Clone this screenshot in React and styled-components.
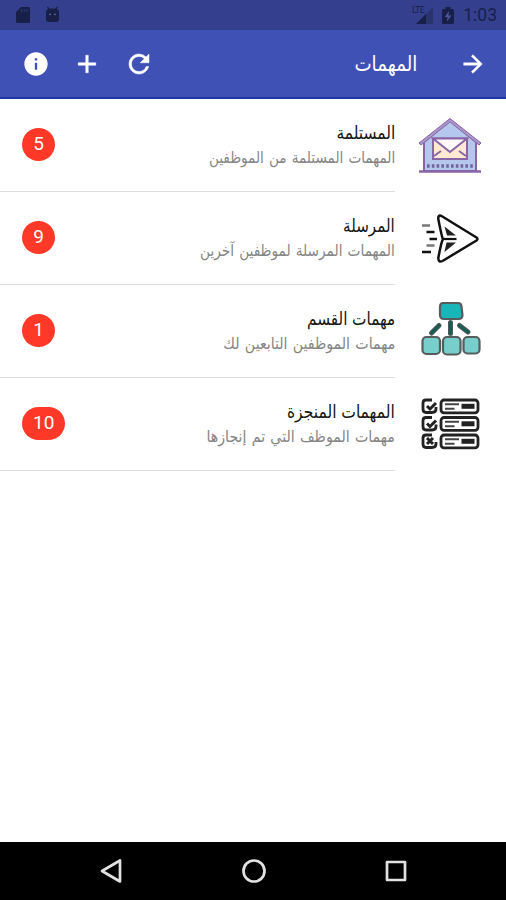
import React from "react";
import styled, { createGlobalStyle } from "styled-components";
import { MdInfo, MdAdd, MdRefresh, MdArrowForward } from "react-icons/md";

const tasks = [
  { id: 1, title: "المستلمة", text: "المهمات المستلمة من الموظفين", count: 5, titleScale: 0.86, textScale: 0.85 },
  { id: 2, title: "المرسلة", text: "المهمات المرسلة لموظفين آخرين", count: 9, titleScale: 0.84, textScale: 0.855 },
  { id: 3, title: "مهمات القسم", text: "مهمات الموظفين التابعين لك", count: 1, titleScale: 0.85, textScale: 0.885 },
  { id: 4, title: "المهمات المنجزة", text: "مهمات الموظف التي تم إنجازها", count: 10, titleScale: 0.865, textScale: 0.885 },
];

const InboxIcon = () => (
  <svg width="66" height="58" viewBox="0 0 66 58" fill="none" stroke="#8965a8" strokeWidth="2">
    <path d="M7 25L33 3L59 25V54H7Z" fill="#b5c7ec" />
    <path d="M2 26L33 1.5L64 26L62 28L33 5L4 28Z" fill="#a997cb" strokeWidth="1" />
    <path d="M16 21.500H50V42H16Z" fill="#ffe9d2" />
    <path d="M16 21.500H50L33 35Z" fill="#fffaf9" />
    <path d="M17 39L24 34M49 39L42 34" />
    <path d="M10 49H57" stroke="#71639c" strokeWidth="3.500" strokeDasharray="2.600 2.200" />
    <path d="M2 54.500H64" strokeWidth="2.400" />
  </svg>
);

const SentIcon = () => (
  <svg width="66" height="58" viewBox="0 0 66 58" fill="none" stroke="#111" strokeWidth="2.5" strokeLinejoin="round">
    <path d="M24.500 6Q21 4.500 21.300 9Q25 28 26 29Q24.500 31 21.300 48Q21.500 53 25.500 51L59.500 30.500Q61.500 29 59.500 27.500Z" />
    <path d="M26 29H39.500" strokeWidth="2.200" />
    <path d="M27.500 16.500L39 25.500H30ZM29.500 32.500H39L27.500 42Z" fill="#222" stroke="none" />
    <path d="M9.500 22H17.500M12.500 29H20M5 42H14" strokeWidth="2.300" />
    <path d="M5 15.500H13M9.500 35.500H17.500" stroke="#777" strokeWidth="2.300" />
  </svg>
);

const TeamIcon = () => (
  <svg width="66" height="58" viewBox="0 0 66 58" fill="none" stroke="#555d5d" strokeWidth="2.2">
    <path d="M26 0H41Q44.500 0 44.500 4L45.500 12Q45.500 16 41.500 16H27Q23 16 23 12V4Q23 0 26 0Z" fill="#18b6b9" />
    <path d="M22 22.500L14.500 30M33.500 19.500V30.500M42.500 22.500L51 29" stroke="#4d5959" strokeWidth="5" strokeLinecap="round" />
    <path d="M22 22.500L14.500 30M33.500 19.500V30.500M42.500 22.500L51 29" stroke="#155c55" strokeWidth="2.600" strokeLinecap="round" />
    <g fill="#78cecb">
      <rect x="5.500" y="34" width="17.500" height="17" rx="4" />
      <rect x="26" y="34" width="17.500" height="17.500" rx="4" />
      <rect x="46.500" y="34" width="16" height="16.500" rx="4" />
    </g>
  </svg>
);

const DoneIcon = () => (
  <svg width="66" height="58" viewBox="0 0 66 58" fill="none" stroke="#222" strokeWidth="2.8">
    {[4, 21.5, 39].map((y, i) => (
      <g key={y} transform={`translate(1 ${y})`}>
        <path d="M14 0H8Q5 0 5 3V9Q5 12.500 8 12.500H14Q18 12.500 18 9V7" />
        <path d={i === 2 ? "M9 3L15 9M15 3L9 9" : "M9 6L12 9L18 3"} strokeWidth="3" />
        <rect x="23" y="0" width="37" height="12.800" rx="3" />
        <path d="M27 4.200H41M27 8.800H36.500" stroke="#444" strokeWidth="2" />
        <path d="M43.500 6.300H56.500" strokeWidth="5" />
      </g>
    ))}
  </svg>
);

const icons = [InboxIcon, SentIcon, TeamIcon, DoneIcon];

const App = () => {
  return (
    <Screen>
      <GlobalStyle />
      <StatusBar>
        <StatusGroup>
          <svg width="14" height="18" viewBox="0 0 14 18">
            <path d="M5 1H12.500Q14 1 14 2.500V15.500Q14 17 12.500 17H1.500Q0 17 0 15.500V6Z" fill="currentColor" />
            <path d="M5.500 3V6M8.300 3V6M11 3V6" stroke="#2b3678" strokeWidth="1.200" />
          </svg>
          <svg width="15" height="18" viewBox="0 0 15 18">
            <path d="M1 6Q1 4 3 3L2 1L3 0.500L4.500 2.500H10.500L12 0.500L13 1L12 3Q14 4 14 6ZM1 6H14V13Q14 16 11 16H4Q1 16 1 13Z" fill="currentColor" />
            <circle cx="5" cy="8.300" r="0.900" fill="#65709f" />
            <circle cx="10" cy="8.300" r="0.900" fill="#65709f" />
          </svg>
        </StatusGroup>
        <StatusGroup $end>
          <Network>
            <Lte>LTE</Lte>
            <svg width="17" height="17" viewBox="0 0 17 17">
              <path d="M0 17L17 0V17Z" fill="#29346f" />
              <path d="M0 17L10 7V17Z" fill="currentColor" />
            </svg>
          </Network>
          <svg width="12" height="17" viewBox="0 0 12 17">
            <path d="M1.500 2H3.500V0H8.500V2H10.500Q12 2 12 3.500V15.500Q12 17 10.500 17H1.500Q0 17 0 15.500V3.500Q0 2 1.500 2Z" fill="currentColor" />
            <path d="M7 4L2.800 10H5.500L5 14.500L9.300 8.500H6.500Z" fill="#4a569d" />
          </svg>
          <Clock>1:03</Clock>
        </StatusGroup>
      </StatusBar>
      <Header>
        <MdArrowForward size={28} />
        <h1>المهمات</h1>
        <Actions>
          <MdRefresh size={30} />
          <MdAdd size={30} />
          <MdInfo size={28} />
        </Actions>
      </Header>
      <List>
        {tasks.map((task, i) => {
          const Icon = icons[i];
          return (
            <Row key={task.id}>
              <IconBox><Icon /></IconBox>
              <Content>
                <Texts>
                  <Title $scale={task.titleScale}>{task.title}</Title>
                  <Description $scale={task.textScale}>{task.text}</Description>
                </Texts>
                <Badge>{task.count}</Badge>
              </Content>
            </Row>
          );
        })}
      </List>
      <NavBar>
        <svg width="24" height="26" viewBox="0 0 24 26"><path d="M21 2.500V23.500L3 13Z" /></svg>
        <svg width="26" height="26" viewBox="0 0 26 26"><circle cx="13" cy="13" r="10.500" /></svg>
        <svg width="24" height="26" viewBox="0 0 24 26"><rect x="3" y="4" width="18" height="18" /></svg>
      </NavBar>
    </Screen>
  );
};

const GlobalStyle = createGlobalStyle`
  * {
    box-sizing: border-box;
  }

  body {
    margin: 0;
    background: #fff;
    font-family: Roboto, "DejaVu Sans", sans-serif;
  }

  svg {
    display: block;
    flex-shrink: 0;
    overflow: visible;
  }
`;

const Screen = styled.div`
  display: flex;
  flex-direction: column;
  height: 900px;
  overflow: hidden;
  direction: rtl;
`;

const StatusBar = styled.div`
  display: flex;
  justify-content: space-between;
  align-items: center;
  direction: ltr;
  height: 30px;
  padding: 0 9px 0 16px;
  background-color: #34408e;
  color: #18204a;
`;

const StatusGroup = styled.div`
  display: flex;
  align-items: center;
  gap: ${({ $end }) => ($end ? "9px" : "15px")};
`;

const Network = styled.div`
  display: flex;
  align-items: flex-start;
`;

const Lte = styled.span`
  margin-right: -8px;
  font-size: 9px;
  line-height: 7px;
  letter-spacing: -0.6px;
`;

const Clock = styled.span`
  font-size: 17.5px;
  line-height: 20px;
`;

const Header = styled.header`
  display: flex;
  align-items: center;
  height: 69px;
  padding: 0 19px 0 22px;
  border-bottom: 2px solid #1e37a4;
  background-color: #4051b5;
  color: #fff;

  h1 {
    margin: 0 42px 0 0;
    font-size: 21px;
    font-weight: 400;
    line-height: 30px;
    transform: scaleX(0.87);
    transform-origin: right;
  }

  path:not([fill="none"]) {
    stroke: currentColor;
    stroke-width: 0.4;
  }

  path[fill="none"] {
    stroke: none;
  }
`;

const Actions = styled.div`
  display: flex;
  align-items: center;
  gap: 22px;
  margin-right: auto;

  svg:last-child path {
    stroke: none;
  }
`;

const List = styled.main`
  flex: 1;
  background-color: #fff;
`;

const Row = styled.div`
  display: flex;
  height: 93px;
`;

const IconBox = styled.div`
  width: 111px;
  padding: 18px 0 0 22px;
  display: flex;
  justify-content: flex-end;
`;

const Content = styled.div`
  flex: 1;
  display: flex;
  justify-content: space-between;
  padding-left: 22px;
  border-bottom: 1px solid #dedede;
`;

const Texts = styled.div`
  padding-top: 21px;
  white-space: nowrap;
`;

const Title = styled.div`
  font-size: 18px;
  line-height: 25px;
  color: #151515;
  word-spacing: 1px;
  transform: scaleX(${({ $scale }) => $scale});
  transform-origin: right;
`;

const Description = styled.div`
  font-size: 16px;
  line-height: 25px;
  color: #858585;
  word-spacing: 2px;
  transform: scaleX(${({ $scale }) => $scale});
  transform-origin: right;
`;

const Badge = styled.span`
  align-self: flex-start;
  min-width: 33px;
  height: 33px;
  margin-top: 29px;
  padding: 0 11px;
  border-radius: 17px;
  background-color: #ff3828;
  color: #fff;
  font-size: 19px;
  line-height: 31px;
  text-align: center;
`;

const NavBar = styled.nav`
  display: flex;
  justify-content: space-between;
  align-items: center;
  direction: ltr;
  height: 58px;
  padding: 0 98px 0 99px;
  background-color: #000;

  svg {
    fill: none;
    stroke: #e2e2e2;
    stroke-width: 2.7;
    stroke-linejoin: round;
  }
`;

export default App;
